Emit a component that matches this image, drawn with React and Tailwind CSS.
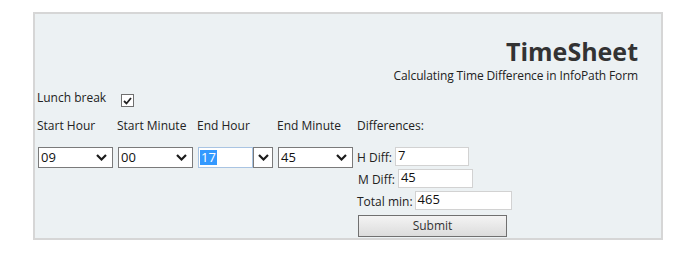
import * as React from "react"

const font = { fontFamily: '"Open Sans", "Noto Sans", sans-serif' }

function Chevron() {
  return (
    <svg width="11" height="7" viewBox="0 0 11 7" className="block">
      <path d="M1 1 L5.5 5.5 L10 1" fill="none" stroke="#1b1b1b" strokeWidth="2.2" />
    </svg>
  )
}

function Dropdown({ value, focused }) {
  if (focused) {
    return (
      <div className="flex h-[21px] w-[75px]">
        <div className="flex flex-1 items-center border border-[#a9c4e2] bg-white pl-[1px]">
          <span className="bg-[#3399ff] px-[1px] text-[13px] leading-[15px] text-white">{value}</span>
        </div>
        <div className="flex w-[20px] items-center justify-center border border-[#7a7a7a] bg-white">
          <Chevron />
        </div>
      </div>
    )
  }
  return (
    <div className="flex h-[21px] w-[75px] items-center justify-between border border-[#7a7a7a] bg-white pl-[2px] pr-[5px]">
      <span className="text-[13px] leading-[15px] text-[#111]">{value}</span>
      <Chevron />
    </div>
  )
}

function Field({ label, value, width, gap }) {
  return (
    <div className="flex items-end">
      <span className="text-[12px] leading-[16px] text-[#222]">{label}</span>
      <div
        className={`${gap} ${width} h-[19px] border border-[#d2d2d2] bg-white pl-[2px] text-[13px] leading-[15px] text-[#111]`}
      >
        {value}
      </div>
    </div>
  )
}

export default function App() {
  const columns = [
    { label: "Start Hour", value: "09" },
    { label: "Start Minute", value: "00" },
    { label: "End Hour", value: "17", focused: true },
    { label: "End Minute", value: "45" },
  ]

  return (
    <div className="min-h-[259px] bg-white pl-[33px] pt-[12px]" style={font}>
      <div className="h-[228px] w-[630px] border-2 border-[#d6d6d6] bg-[#ecf1f3] pl-[2px]">
        {/* Header */}
        <div className="flex flex-col items-end pr-[23px] pt-[22px]">
          <h1 className="text-[25px] font-bold leading-[30px] text-[#333]">TimeSheet</h1>
          <p className="mt-[2px] text-[12px] leading-[16px] tracking-[-0.12px] text-[#222]">
            Calculating Time Difference in InfoPath Form
          </p>
        </div>

        {/* Lunch break */}
        <div className="mt-[6px] flex h-[16px] items-center">
          <span className="w-[84px] text-[12px] leading-[16px] text-[#222]">Lunch break</span>
          <div className="mt-[5px] flex h-[13px] w-[13px] items-center justify-center border border-[#707070] bg-white">
            <svg width="9" height="8" viewBox="0 0 9 8">
              <path d="M1 4 L3.5 6.5 L8 1" fill="none" stroke="#222" strokeWidth="1.8" />
            </svg>
          </div>
        </div>

        {/* Fields */}
        <div className="mt-[12px] flex">
          {columns.map((c) => (
            <div key={c.label} className="flex w-[80px] flex-col">
              <span className="h-[16px] text-[12px] leading-[16px] text-[#222]">{c.label}</span>
              <div className="ml-[1px] mt-[13px]">
                <Dropdown value={c.value} focused={c.focused} />
              </div>
            </div>
          ))}
          <div className="flex flex-col">
            <span className="h-[16px] text-[12px] leading-[16px] text-[#222]">Differences:</span>
            <div className="mt-[13px] flex flex-col gap-[3px]">
              <Field label="H Diff:" value="7" width="w-[74px]" gap="ml-[3px]" />
              <div className="pl-[1px]">
                <Field label="M Diff:" value="45" width="w-[75px]" gap="ml-[3px]" />
              </div>
              <Field label="Total min:" value="465" width="w-[97px]" gap="ml-[2px]" />
              <button className="ml-[1px] mt-[2px] h-[22px] w-[149px] border border-[#707070] bg-gradient-to-b from-[#f4f4f4] to-[#dcdcdc] text-[12px] leading-[16px] text-[#333]">
                Submit
              </button>
            </div>
          </div>
        </div>
      </div>
    </div>
  )
}
